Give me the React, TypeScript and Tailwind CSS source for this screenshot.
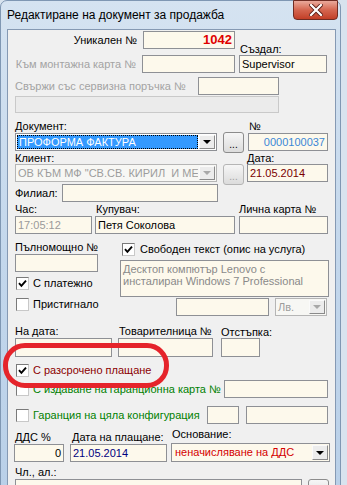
import React from "react";

const F = "[font-family:'Liberation_Sans',Arial,sans-serif]";

function Field({ className = "", children }: { className?: string; children?: React.ReactNode }) {
  return (
    <div
      className={
        "border border-[#8e9095] bg-[#fdf9ec] h-[18px] flex items-center px-[2px] overflow-hidden whitespace-nowrap shrink-0 " +
        className
      }
    >
      {children}
    </div>
  );
}

function Check({ checked }: { checked?: boolean }) {
  return (
    <div className="w-[13px] h-[13px] shrink-0 border border-t-[#7a7a7a] border-l-[#7a7a7a] border-r-[#c8c8c8] border-b-[#c8c8c8] bg-white flex items-center justify-center">
      {checked && (
        <svg width="9" height="9" viewBox="0 0 9 9">
          <path d="M1 4.2 L3.4 6.8 L8 1.6" stroke="#000" strokeWidth="1.9" fill="none" />
        </svg>
      )}
    </div>
  );
}

function Arrow({ disabled }: { disabled?: boolean }) {
  return (
    <svg width="8" height="4" viewBox="0 0 8 4">
      <path d="M0 0 L8 0 L4 4 Z" fill={disabled ? "#a8a8a8" : "#000"} />
    </svg>
  );
}

function DropBtn({ disabled, className = "" }: { disabled?: boolean; className?: string }) {
  return (
    <div
      className={
        "w-[16px] h-full shrink-0 flex items-center justify-center border border-t-[#fafafa] border-l-[#fafafa] border-r-[#8a8a8a] border-b-[#8a8a8a] bg-[#ececec] " +
        className
      }
    >
      <Arrow disabled={disabled} />
    </div>
  );
}

function DotBtn({ disabled, className = "" }: { disabled?: boolean; className?: string }) {
  return (
    <div
      className={
        "w-[21px] h-[21px] shrink-0 rounded-[3px] border border-[#8c8c8c] bg-gradient-to-b from-[#f6f6f6] to-[#dcdcdc] flex items-end justify-center pb-[3px] text-[10px] leading-[8px] " +
        (disabled ? "text-[#a0a0a0] border-[#b5b5b5] " : "text-black ") +
        className
      }
    >
      ...
    </div>
  );
}

export default function App() {
  return (
    <div className={"relative w-[347px] h-[485px] overflow-hidden bg-[#d8e3ee] text-[11px] text-black " + F}>
      {/* window */}
      <div className="w-[341px] h-[520px] rounded-t-[7px] border border-[#7f97b3] bg-gradient-to-b from-[#d5e3f1] via-[#c3d7ec] to-[#b8cfe8] flex flex-col">
        {/* title bar */}
        <div className="h-[28px] flex items-start shrink-0">
          <div className="pl-[6px] pt-[7px] text-[12px] leading-[15px] text-black flex-1">
            Редактиране на документ за продажба
          </div>
          <div className="mr-[2px] mt-[-1px] w-[45px] h-[20px] rounded-b-[4px] border border-[#6f2c23] bg-gradient-to-b from-[#e9a99b] via-[#d4654f] to-[#c23e26] flex items-center justify-center">
            <svg width="14" height="12" viewBox="0 0 14 12">
              <path d="M2 1 L12 11 M12 1 L2 11" stroke="#5a1e16" strokeWidth="4" strokeLinecap="square" />
              <path d="M2 1 L12 11 M12 1 L2 11" stroke="#ffffff" strokeWidth="2.2" strokeLinecap="square" />
            </svg>
          </div>
        </div>
        {/* client */}
        <div className="ml-[6px] w-[329px] flex-1 border border-[#8599b3] bg-[#f0f0f0]">
          {/* Row A */}
          <div className="mt-[1px] h-[24px] flex items-start">
            <div className="w-[129px] h-[18px] leading-[18px] text-right">Уникален №</div>
            <Field className="ml-[6px] w-[92px] justify-end font-bold text-[#e00000] text-[13px]">1042</Field>
            <div className="ml-[5px] mt-[11px] leading-[14px]">Създал:</div>
          </div>
          {/* Row B */}
          <div className="h-[18px] flex items-start">
            <div className="w-[128px] h-[18px] leading-[18px] text-right text-[#a3a3a3] whitespace-nowrap">Към монтажна карта №</div>
            <Field className="ml-[6px] w-[93px]" />
            <Field className="ml-[4px] w-[88px]">Supervisor</Field>
          </div>
          {/* Row C */}
          <div className="mt-[4px] h-[18px] flex items-start">
            <div className="ml-[7px] w-[183px] h-[18px] leading-[18px] text-[#a3a3a3] whitespace-nowrap">Свържи със сервизна поръчка №</div>
            <Field className="w-[81px]" />
          </div>
          {/* Row D */}
          <div className="mt-[1px] ml-[7px] w-[264px] h-[17px] border border-[#c9c9c9] bg-[#ebebeb]" />
          {/* Row E */}
          <div className="h-[20px] flex items-end">
            <div className="ml-[7px] w-[234px] leading-[13px]">Документ:</div>
            <div className="leading-[13px]">№</div>
          </div>
          {/* Row F */}
          <div className="h-[18px] flex items-start">
            <div className="ml-[7px] w-[202px] h-[18px] shrink-0 border border-[#8e9095] bg-white flex p-[1px]">
              <div className="flex-1 bg-[#3399ff] text-white leading-[14px] px-[2px] outline-1 outline-dotted outline-[#000] outline-offset-[-1px] whitespace-nowrap overflow-hidden">
                ПРОФОРМА ФАКТУРА
              </div>
              <DropBtn className="ml-[1px]" />
            </div>
            <DotBtn className="ml-[6px] mt-[-1px]" />
            <Field className="ml-[4px] w-[80px] justify-end text-[#3b87d6]">0000100037</Field>
          </div>
          {/* Row G */}
          <div className="h-[13px] flex items-end">
            <div className="ml-[7px] w-[232px] leading-[12px]">Клиент:</div>
            <div className="leading-[12px]">Дата:</div>
          </div>
          {/* Row H */}
          <div className="h-[18px] flex items-start">
            <div className="ml-[7px] w-[202px] h-[18px] shrink-0 border border-[#b5b5b5] bg-[#f7f7f4] flex p-[1px]">
              <div className="flex-1 min-w-0 text-[#9c9c9c] leading-[14px] px-[1px] whitespace-nowrap overflow-hidden">
                ОВ КЪМ МФ "СВ.СВ. КИРИЛ&nbsp; И МЕТОДИЙ"
              </div>
              <DropBtn disabled className="ml-[1px]" />
            </div>
            <DotBtn disabled className="ml-[6px]" />
            <Field className="ml-[3px] w-[81px] text-[#7a0000]">21.05.2014</Field>
          </div>
          {/* Row I */}
          <div className="mt-[2px] h-[17px] flex items-center">
            <div className="ml-[7px] w-[47px] leading-[14px]">Филиал:</div>
            <Field className="w-[156px] h-[17px]" />
          </div>
          {/* Row J */}
          <div className="h-[15px] flex items-end">
            <div className="ml-[7px] w-[81px] leading-[13px]">Час:</div>
            <div className="w-[143px] leading-[13px]">Купувач:</div>
            <div className="leading-[13px]">Лична карта №</div>
          </div>
          {/* Row K */}
          <div className="h-[18px] flex items-start">
            <Field className="ml-[7px] w-[77px] text-[#9a9a9a]">17:05:12</Field>
            <Field className="ml-[3px] w-[140px]">Петя Соколова</Field>
            <Field className="ml-[4px] w-[89px]" />
          </div>
          {/* Row L */}
          <div className="h-[64px] flex items-start">
            <div className="ml-[7px] w-[98px] flex flex-col">
              <div className="mt-[6px] leading-[14px] whitespace-nowrap">Пълномощно №</div>
              <Field className="w-[83px]" />
              <div className="mt-[5px] h-[13px] flex items-center">
                <div className="ml-[1px]"><Check checked /></div>
                <div className="ml-[4px] leading-[13px]">С платежно</div>
              </div>
            </div>
            <div className="ml-[7px] flex flex-col">
              <div className="mt-[9px] h-[13px] flex items-center">
                <div className="ml-[2px]"><Check checked /></div>
                <div className="ml-[5px] leading-[13px] whitespace-nowrap">Свободен текст (опис на услуга)</div>
              </div>
              <div className="mt-[4px] w-[209px] h-[37px] border border-[#8e9095] bg-[#fdf9ec] px-[2px] pt-[2px] text-[#8a8a8a] leading-[12px]">
                Десктоп компютър Lenovo с<br />инсталиран Windows 7 Professional
              </div>
            </div>
          </div>
          {/* Row L2 */}
          <div className="h-[18px] flex items-start">
            <div className="ml-[8px] w-[160px] h-[13px] flex items-center">
              <Check />
              <div className="ml-[4px] leading-[13px]">Пристигнало</div>
            </div>
            <Field className="w-[93px]" />
            <div className="ml-[6px] w-[52px] h-[18px] shrink-0 border border-[#b5b5b5] bg-[#f7f7f4] flex p-[1px]">
              <div className="flex-1 text-[#9c9c9c] leading-[14px] px-[1px]">Лв.</div>
              <DropBtn disabled />
            </div>
          </div>
          {/* Row M */}
          <div className="h-[22px] flex items-end">
            <div className="ml-[7px] w-[104px] leading-[14px]">На дата:</div>
            <div className="w-[102px] leading-[14px] whitespace-nowrap">Товарителница №</div>
            <div className="leading-[14px] mb-[-1px]">Отстъпка:</div>
          </div>
          {/* Row N */}
          <div className="h-[19px] flex items-start">
            <Field className="ml-[7px] w-[97px] h-[19px]" />
            <Field className="ml-[6px] w-[95px] h-[19px]" />
            <Field className="ml-[8px] w-[39px] h-[19px]" />
          </div>
          {/* Row O */}
          <div className="mt-[7px] ml-[8px] h-[13px] flex items-center">
            <Check checked />
            <div className="ml-[4px] leading-[13px] text-[#8b0000]">С разсрочено плащане</div>
          </div>
          {/* Row P */}
          <div className="mt-[3px] h-[18px] flex items-center">
            <div className="ml-[8px] w-[208px] flex items-center">
              <Check />
              <div className="ml-[4px] leading-[13px] text-[#008000] whitespace-nowrap">С издаване на гаранционна карта №</div>
            </div>
            <Field className="w-[104px]" />
          </div>
          {/* Row Q */}
          <div className="mt-[8px] h-[18px] flex items-center">
            <div className="ml-[8px] w-[191px] flex items-center">
              <Check />
              <div className="ml-[4px] leading-[13px] text-[#008000] whitespace-nowrap">Гаранция на цяла конфигурация</div>
            </div>
            <Field className="w-[32px]" />
            <Field className="ml-[7px] w-[82px]" />
          </div>
          {/* Row R */}
          <div className="h-[20px] flex items-end">
            <div className="ml-[7px] w-[57px] leading-[13px]">ДДС %</div>
            <div className="w-[100px] leading-[13px] whitespace-nowrap">Дата на плащане:</div>
            <div className="leading-[13px] mb-[3px]">Основание:</div>
          </div>
          {/* Row S */}
          <div className="h-[18px] flex items-start">
            <Field className="ml-[6px] w-[50px] justify-end">0</Field>
            <Field className="ml-[6px] w-[97px] text-[#000080]">21.05.2014</Field>
            <div className="ml-[4px] mt-[-1px] w-[159px] h-[19px] shrink-0 border border-[#8e9095] bg-[#fdf9ec] flex p-[1px]">
              <div className="flex-1 text-[#d40000] leading-[15px] px-[2px] whitespace-nowrap overflow-hidden">неначисляване на ДДС</div>
              <DropBtn />
            </div>
          </div>
          {/* Row T */}
          <div className="h-[17px] flex items-end">
            <div className="ml-[7px] leading-[13px]">Чл., ал.:</div>
          </div>
          {/* Row U */}
          <div className="h-[21px] flex items-start">
            <Field className="ml-[7px] w-[287px] items-start pt-[2px] text-[#d40000]">Чл. 113, ал. 9 от ЗДДС</Field>
            <DotBtn className="ml-[6px]" />
          </div>
        </div>
      </div>
      {/* red annotation */}
      <div className="absolute left-[3px] top-[343px] w-[166px] h-[45px] border-[5px] border-[#e5242b] rounded-[22px]" />
    </div>
  );
}
